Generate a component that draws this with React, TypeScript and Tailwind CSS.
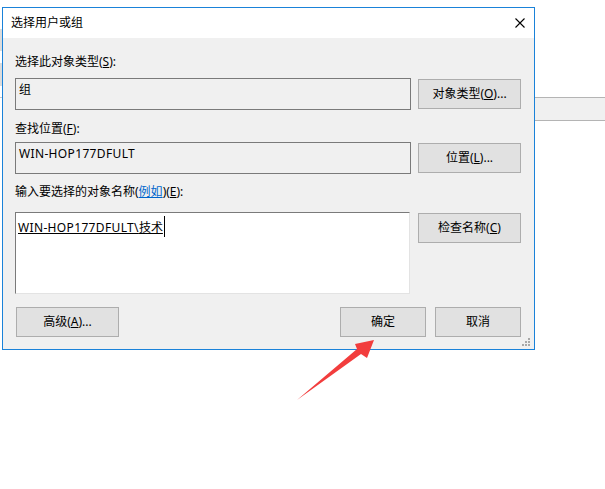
import React from "react";

function Btn({ children, className = "" }: { children: React.ReactNode; className?: string }) {
  return (
    <div
      className={`flex h-[30px] items-center justify-center border border-[#adadad] bg-[#e1e1e1] text-[12px] leading-[16px] text-black ${className}`}
    >
      {children}
    </div>
  );
}

export default function App() {
  return (
    <div className="relative h-[489px] w-[605px] overflow-hidden bg-white font-['Noto_Sans','Noto_Sans_CJK_SC',sans-serif] text-[12px] leading-[16px] text-black">
      {/* background fragments behind the dialog */}
      <div className="absolute left-0 top-[29px] h-[22px] w-[2px] bg-[#dcdcdc]" />
      <div className="absolute left-0 top-[63px] h-[23px] w-[2px] bg-[#dcdcdc]" />
      <div className="absolute left-0 top-[97px] h-[1px] w-[2px] bg-[#c8c8c8]" />
      <div className="absolute left-[535px] right-0 top-[97px] h-[24px] border-y border-[#b4b4b4] bg-[#f0f0f0]" />

      {/* dialog window */}
      <div className="absolute left-[2px] top-[7px] flex h-[343px] w-[533px] flex-col border border-[#1a82d9] bg-[#f0f0f0]">
        {/* title bar */}
        <div className="flex h-[30px] items-center justify-between bg-white pl-[8px] pr-[9px]">
          <span>选择用户或组</span>
          <svg width="10" height="10" viewBox="0 0 10 10" className="block">
            <path d="M0.5 0.5 L9.5 9.5 M9.5 0.5 L0.5 9.5" stroke="#000" strokeWidth="1.1" fill="none" />
          </svg>
        </div>

        {/* body */}
        <div className="relative flex flex-1 flex-col pl-[12px] pr-[13px] pt-[16px]">
          <div>
            选择此对象类型(<u>S</u>):
          </div>
          <div className="mt-[8px] flex items-center gap-[7px]">
            <div className="h-[32px] w-[396px] border border-[#7a7a7a] bg-[#f0f0f0] pl-[3px] pt-[3px]">组</div>
            <Btn className="w-[103px]">
              对象类型(<u>O</u>)...
            </Btn>
          </div>

          <div className="mt-[11px]">
            查找位置(<u>F</u>):
          </div>
          <div className="mt-[5px] flex items-center gap-[7px]">
            <div className="h-[32px] w-[396px] border border-[#7a7a7a] bg-[#f0f0f0] pl-[3px] pt-[3px]">
              <span className="tracking-[0.35px]">WIN-HOP177DFULT</span>
            </div>
            <Btn className="w-[103px]">
              位置(<u>L</u>)...
            </Btn>
          </div>

          <div className="mt-[10px]">
            输入要选择的对象名称(<u className="text-[#0066cc]">例如</u>)(<u>E</u>):
          </div>
          <div className="mt-[12px] flex items-start gap-[8px]">
            <div className="h-[82px] w-[395px] border-y border-l border-r border-b-[#e3e3e3] border-l-[#7a7a7a] border-r-[#e3e3e3] border-t-[#7a7a7a] bg-white pl-[2px] pt-[3px]">
              <div className="flex h-[21px] items-end">
                <u className="pb-[1px]">
                  <span className="tracking-[0.35px]">WIN-HOP177DFULT\</span>技术
                </u>
                <span className="ml-[1px] block h-[21px] w-[1px] bg-black" />
              </div>
            </div>
            <Btn className="mt-[1px] w-[103px]">
              检查名称(<u>C</u>)
            </Btn>
          </div>

          <div className="mt-[13px] flex items-center justify-between">
            <Btn className="ml-[1px] w-[103px]">
              高级(<u>A</u>)...
            </Btn>
            <div className="flex gap-[9px]">
              <Btn className="w-[86px]">确定</Btn>
              <Btn className="w-[86px]">取消</Btn>
            </div>
          </div>

          {/* resize grip */}
          <svg width="9" height="9" viewBox="0 0 9 9" className="absolute bottom-[2px] right-[3px]">
            <rect x="6" y="0" width="2" height="2" fill="#a8a8a8" />
            <rect x="3" y="3" width="2" height="2" fill="#a8a8a8" />
            <rect x="6" y="3" width="2" height="2" fill="#a8a8a8" />
            <rect x="0" y="6" width="2" height="2" fill="#a8a8a8" />
            <rect x="3" y="6" width="2" height="2" fill="#a8a8a8" />
            <rect x="6" y="6" width="2" height="2" fill="#a8a8a8" />
          </svg>
        </div>
      </div>

      {/* red annotation arrow */}
      <svg width="605" height="489" viewBox="0 0 605 489" className="pointer-events-none absolute left-0 top-0">
        <polygon
          points="374,340 367,358 361,354 297,400 357,349 355,344"
          fill="#f23d3d"
        />
      </svg>
    </div>
  );
}
